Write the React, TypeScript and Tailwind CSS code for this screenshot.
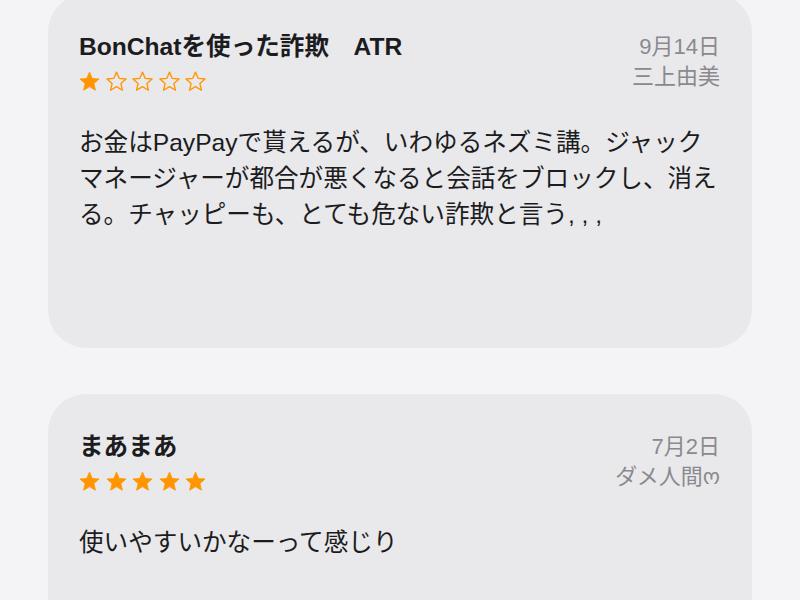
interface Review {
  id: number;
  title: string;
  rating: number;
  date: string;
  author: string;
  lines: string[];
}

const reviews: Review[] = [
  {
    id: 1,
    title: "BonChatを使った詐欺　ATR",
    rating: 1,
    date: "9月14日",
    author: "三上由美",
    lines: [
      "お金はPayPayで貰えるが、いわゆるネズミ講。ジャック",
      "マネージャーが都合が悪くなると会話をブロックし、消え",
      "る。チャッピーも、とても危ない詐欺と言う, , ,",
    ],
  },
  {
    id: 2,
    title: "まあまあ",
    rating: 5,
    date: "7月2日",
    author: "ダメ人間ო",
    lines: ["使いやすいかなーって感じり"],
  },
];

function Star({ filled }: { filled: boolean }) {
  return (
    <svg width="23" height="23" viewBox="0 0 24 24" className="shrink-0">
      <path
        d="M12 2.2l2.9 6.6 7.1.6-5.4 4.7 1.6 7-6.2-3.7-6.2 3.7 1.6-7L2 9.4l7.1-.6z"
        fill={filled ? "#ff9500" : "none"}
        stroke="#ff9500"
        strokeWidth={filled ? 0.8 : 1.4}
        strokeLinejoin="round"
      />
    </svg>
  );
}

function ReviewCard({ review, first }: { review: Review; first?: boolean }) {
  return (
    <div
      className={
        "bg-[#e9e9eb] rounded-[38px] h-[354px] pl-[31px] pr-[32px] pt-[38px] " +
        (first ? "-mt-[6px]" : "")
      }
    >
      <div className="flex justify-between items-start">
        <div className="flex flex-col">
          <div className="text-[24.6px] leading-[30px] font-bold text-[#1c1c1e] whitespace-pre">
            {review.title}
          </div>
          <div className="flex gap-[3.5px] mt-[8px] -ml-[1px]">
            {[0, 1, 2, 3, 4].map((i) => (
              <Star key={i} filled={i < review.rating} />
            ))}
          </div>
        </div>
        <div className="flex flex-col items-end text-[22px] leading-[30px] text-[#8a8a8e]">
          <div>{review.date}</div>
          <div>{review.author}</div>
        </div>
      </div>
      <div className="mt-[32px] text-[24.6px] leading-[36px] text-[#1c1c1e]">
        {review.lines.map((line, i) => (
          <div key={i} className="whitespace-nowrap">
            {line}
          </div>
        ))}
      </div>
    </div>
  );
}

export default function App() {
  return (
    <div
      className="w-[800px] h-[600px] overflow-hidden bg-[#f4f4f6] px-[48px]"
      style={{ fontFamily: '"Liberation Sans", "Noto Sans CJK JP", "DejaVu Sans", sans-serif' }}
    >
      <div className="flex flex-col gap-[46px]">
        {reviews.map((r, i) => (
          <ReviewCard key={r.id} review={r} first={i === 0} />
        ))}
      </div>
    </div>
  );
}
